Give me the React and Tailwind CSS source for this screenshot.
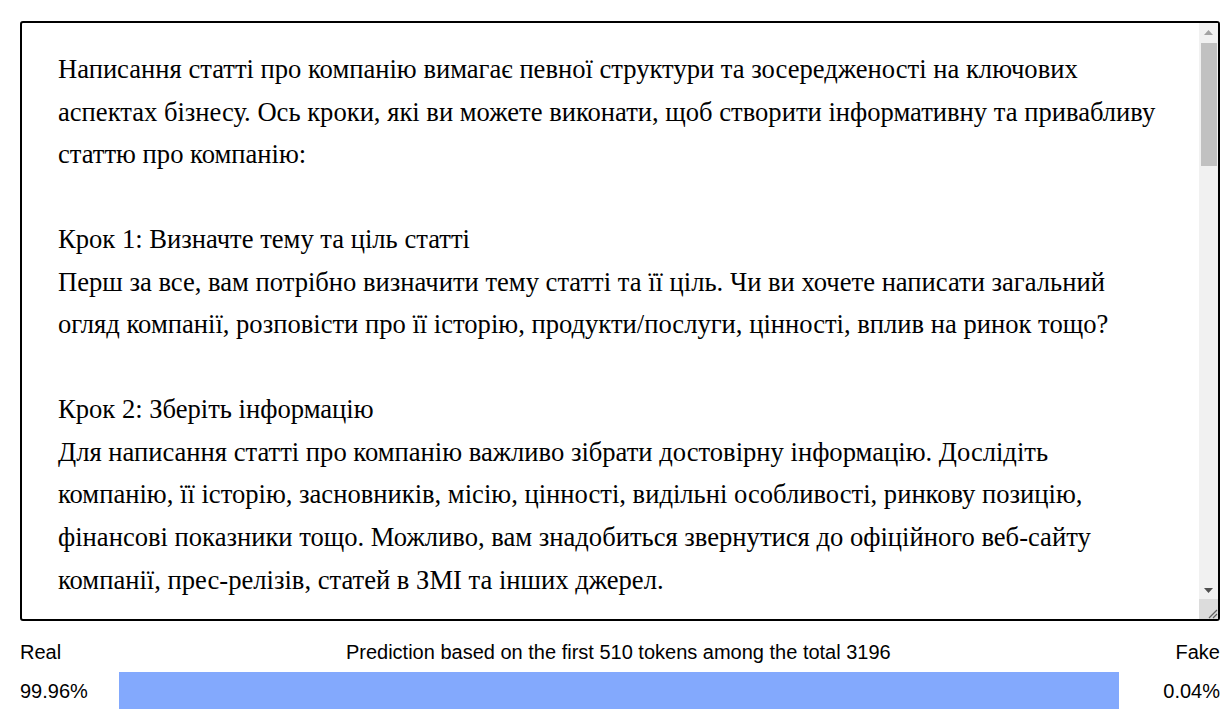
const article = `Написання статті про компанію вимагає певної структури та зосередженості на ключових аспектах бізнесу. Ось кроки, які ви можете виконати, щоб створити інформативну та привабливу статтю про компанію:

Крок 1: Визначте тему та ціль статті
Перш за все, вам потрібно визначити тему статті та її ціль. Чи ви хочете написати загальний огляд компанії, розповісти про її історію, продукти/послуги, цінності, вплив на ринок тощо?

Крок 2: Зберіть інформацію
Для написання статті про компанію важливо зібрати достовірну інформацію. Дослідіть компанію, її історію, засновників, місію, цінності, видільні особливості, ринкову позицію, фінансові показники тощо. Можливо, вам знадобиться звернутися до офіційного веб-сайту компанії, прес-релізів, статей в ЗМІ та інших джерел.

Крок 3: Складіть план статті
Після збору інформації складіть план статті. Визначте основні розділи, які ви хочете включити, та послідовність, у якій вони будуть представлені. Це допоможе вам структурувати думки та зробити статтю логічною та зрозумілою для читача.

Крок 4: Напишіть вступ
Вступ повинен привернути увагу читача та коротко представити компанію. Ви можете почати з цікавого факту, статистики або історії, яка ілюструє діяльність компанії.

Крок 5: Розкажіть про історію компанії
Опишіть, як і коли була заснована компанія, хто її засновники, які були перші кроки та ключові етапи розвитку.

Крок 6: Опишіть продукти та послуги
Розкажіть, що саме пропонує компанія своїм клієнтам, чим її пропозиції відрізняються від конкурентів.

Крок 7: Напишіть висновок
Підсумуйте основні думки статті та підкресліть, чому компанія є важливою або цікавою.`

// fake classic scrollbar drawn over the textarea edge
const Scrollbar = () => (
  <div className="absolute top-[2px] right-[2px] bottom-[2px] w-[19px] bg-[#f1f1f1] flex flex-col pointer-events-none">
    <div className="h-[18px] flex items-center justify-center">
      <svg width="9" height="5" viewBox="0 0 9 5">
        <path d="M4.5 0 L9 5 L0 5 Z" fill="#a3a3a3" />
      </svg>
    </div>
    <div className="flex-1 relative">
      <div className="absolute top-[2px] left-[2px] right-[1px] h-[123px] bg-[#c1c1c1]" />
    </div>
    <div className="h-[18px] flex items-center justify-center">
      <svg width="9" height="5" viewBox="0 0 9 5">
        <path d="M0 0 L9 0 L4.5 5 Z" fill="#505050" />
      </svg>
    </div>
    <div className="h-[20px] bg-[#dcdcdc] flex items-end justify-end">
      <svg width="12" height="12" viewBox="0 0 12 12">
        <path d="M11 3 L3 11 M11 7 L7 11" stroke="#606060" strokeWidth="1.2" />
      </svg>
    </div>
  </div>
)

const App = () => {
  return (
    <div className="pl-5 pt-[21px] font-['Liberation_Sans',Arial,sans-serif] text-black bg-white">
      <div className="w-[1200px]">
        <div className="relative h-[600px]">
          <textarea
            readOnly
            defaultValue={article}
            className="block w-full h-full border-2 border-black rounded-[3px] pl-[36px] pr-[50px] pt-[25px] pb-4 text-[26.6px] leading-[42.55px] font-['Liberation_Serif','Times_New_Roman',serif] text-black overflow-hidden resize-none outline-none"
          />
          <Scrollbar />
        </div>
        <div className="flex items-center justify-between mt-[19px] h-[24px] text-[20px]">
          <span>Real</span>
          <span>Prediction based on the first 510 tokens among the total 3196</span>
          <span>Fake</span>
        </div>
        <div className="flex items-center mt-[8px] h-[37px] text-[20px]">
          <span className="w-[99px]">99.96%</span>
          <div className="w-[1000px] h-[37px] bg-[#83a9fd]" />
          <span className="flex-1 text-right">0.04%</span>
        </div>
      </div>
    </div>
  )
}

export default App
